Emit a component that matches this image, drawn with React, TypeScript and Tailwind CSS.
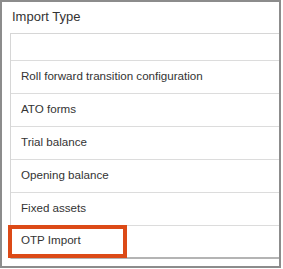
const items = [
  'Roll forward transition configuration',
  'ATO forms',
  'Trial balance',
  'Opening balance',
  'Fixed assets',
  'OTP Import',
];

export default function App() {
  return (
    <div className="w-[283px] h-[269px] bg-white font-['Liberation_Sans',Arial,sans-serif] text-[#333]">
      <div className="w-[281px] h-[268px] border-2 border-[#8c8c8c] pl-2 flex flex-col">
        <div className="h-[31px] flex items-center pl-[2px] pb-[3px] text-[13px] leading-none">Import Type</div>
        <div className="border-l border-t border-[#d6d6d6] flex flex-col">
          <div className="h-[27px] border-b border-[#dcdcdc]"></div>
          {items.map((item, i) => {
            const last = i === items.length - 1;
            return (
              <div
                key={item}
                className={`relative h-[33px] flex items-center pl-[10px] pb-[3px] text-[11.6px] leading-none ${
                  last ? 'border-b-2 border-[#b4b4b4]' : 'border-b border-[#dcdcdc]'
                }`}
              >
                {item}
                {last && (
                  <div className="absolute left-[-3px] top-[-1px] w-[119px] h-[33px] border-4 border-[#dc4a17]"></div>
                )}
              </div>
            );
          })}
        </div>
      </div>
    </div>
  );
}
